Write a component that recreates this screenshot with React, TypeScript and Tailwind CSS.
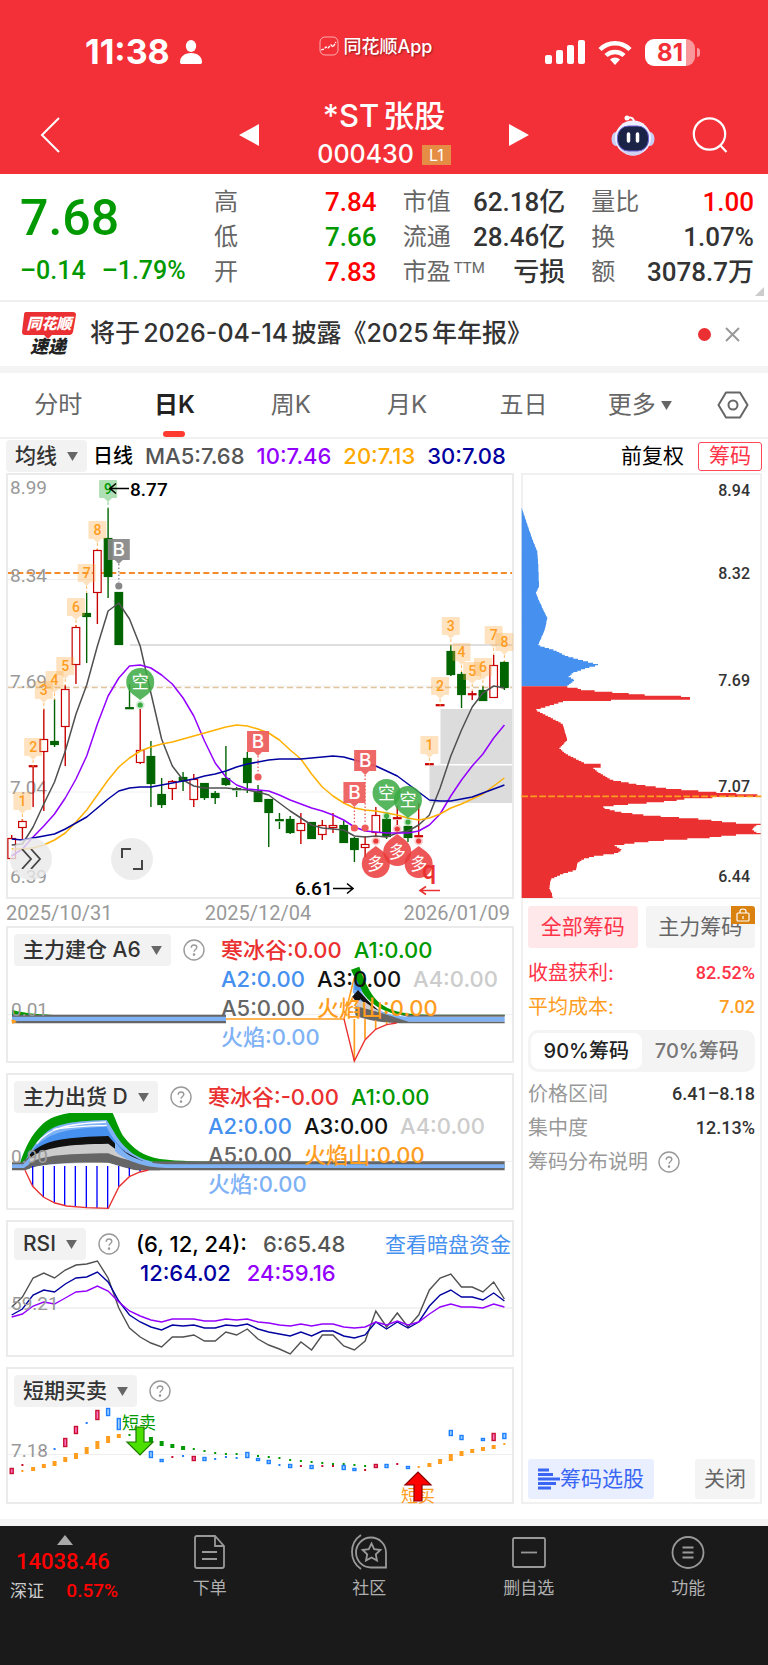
import { useState } from "react";
import type { ReactNode } from "react";

// horizontal slot of the n-th trading day, shared by every chart
const slot = (i: number) => 11.7 + i * 10.71;

type Candle = [top: number, bottom: number, high: number, low: number, up: boolean];

// [body top, body bottom, high, low, rising]
const CANDLES: Candle[] = [
  [837, 858, 834, 858, true], [820, 827, 818, 838, true], [765, 766, 765, 806, true], [738, 751, 708, 810, true],
  [740, 744, 698, 746, false], [688, 726, 684, 765, true], [626, 664, 624, 683, true], [612, 616, 592, 662, false],
  [549, 592, 548, 623, true], [537, 576, 507, 597, false], [591, 644, 591, 644, false], [707, 709, 683, 709, false],
  [749, 762, 708, 763, true], [755, 783, 740, 806, false], [793, 804, 777, 807, false], [780, 788, 779, 799, true],
  [776, 780, 771, 790, false], [778, 799, 773, 806, true], [782, 797, 782, 799, false], [792, 797, 790, 803, false],
  [777, 784, 745, 785, false], [788, 790, 786, 796, false], [757, 782, 751, 792, false], [790, 801, 784, 801, false],
  [798, 812, 798, 846, false], [819, 821, 812, 828, false], [818, 832, 815, 833, false], [822, 830, 812, 843, true],
  [821, 838, 821, 838, false], [824, 834, 819, 839, true], [824, 827, 812, 832, true], [824, 842, 820, 842, false],
  [837, 849, 836, 861, false], [843, 847, 835, 856, true], [814, 832, 806, 835, true], [818, 836, 817, 838, false],
  [817, 819, 805, 824, true], [825, 837, 825, 841, false], [835, 836, 802, 836, true], [763, 764, 763, 764, true],
  [704, 705, 704, 705, true], [650, 674, 644, 675, false], [673, 694, 671, 707, false], [693, 694, 690, 699, true],
  [689, 700, 685, 700, false], [664, 697, 654, 697, true], [661, 687, 660, 689, false],
];

const MA5 = [844, 843, 826, 803, 781, 750, 713, 684, 645, 610, 602, 618, 645, 692, 738, 765, 779, 785, 787, 787, 787, 788, 789, 791, 794, 802, 810, 817, 824, 827, 828, 829, 835, 836, 835, 836, 832, 830, 824, 814, 787, 755, 729, 706, 692, 685, 687];
const MA10 = [855, 848, 836, 825, 813, 797, 778, 755, 723, 695, 677, 665, 664, 667, 674, 683, 697, 715, 740, 762, 776, 784, 788, 789, 790, 794, 799, 803, 807, 810, 814, 819, 826, 830, 831, 832, 832, 832, 830, 824, 813, 795, 779, 765, 753, 737, 724];
const MA20 = [848, 848, 847, 844, 839, 832, 821, 809, 794, 779, 766, 757, 750, 746, 743, 741, 738, 735, 732, 729, 726, 724, 725, 728, 732, 739, 749, 758, 773, 786, 795, 802, 807, 809, 810, 812, 814, 817, 819, 817, 813, 807, 803, 798, 793, 785, 777];
const MA30 = [838, 839, 837, 835, 833, 828, 822, 816, 807, 798, 790, 787, 786, 786, 784, 782, 780, 778, 775, 773, 770, 766, 763, 761, 759, 758, 758, 758, 757, 756, 755, 756, 759, 762, 765, 770, 775, 783, 791, 799, 800, 800, 798, 796, 792, 788, 784];

const RSI6 = [87, 77, 58, 53, 58, 50, 45, 44, 41, 58, 88, 108, 117, 123, 127, 117, 117, 115, 121, 121, 112, 115, 109, 119, 125, 129, 134, 122, 130, 115, 115, 126, 130, 121, 91, 107, 93, 107, 95, 70, 58, 54, 67, 67, 72, 62, 79];
const RSI12 = [95, 89, 75, 70, 72, 64, 58, 57, 52, 62, 81, 95, 102, 107, 110, 105, 106, 105, 108, 108, 105, 106, 104, 109, 112, 114, 116, 112, 116, 111, 111, 116, 118, 115, 102, 109, 102, 108, 102, 86, 75, 70, 77, 77, 80, 73, 81];
const RSI24 = [97, 94, 86, 82, 84, 78, 72, 71, 66, 71, 82, 91, 96, 100, 102, 99, 99, 99, 101, 101, 99, 100, 99, 102, 103, 105, 106, 104, 106, 104, 104, 107, 108, 107, 102, 105, 101, 105, 102, 94, 87, 84, 87, 87, 88, 84, 87];

// nine-turn sequence tags: [day, label, top of the tag]
const TAGS: [number, string, number][] = [
  [1, "1", 791], [2, "2", 737], [3, "3", 680], [4, "4", 670], [5, "5", 656], [6, "6", 597], [7, "7", 563], [8, "8", 520],
  [39, "1", 735], [40, "2", 676], [41, "3", 616], [42, "4", 642], [43, "5", 661], [44, "6", 657], [45, "7", 625], [46, "8", 632],
];

// [y, reach] along the right edge of the chip distribution
const CHIPS: [number, number][] = [
  [126, 36], [150, 44], [180, 54], [215, 66], [255, 82], [300, 85], [360, 87], [378, 78], [400, 86], [455, 112], [490, 104],
  [536, 84], [552, 136], [568, 168], [584, 226], [595, 268], [603, 234], [618, 190], [630, 176], [640, 194], [658, 172], [661, 172],
  [662, 195], [670, 215], [678, 320], [685, 404], [690, 540], [697, 540], [700, 350], [704, 162], [716, 122], [730, 76], [750, 116],
  [772, 158], [820, 172], [845, 148], [862, 168], [892, 228], [893, 272], [901, 272], [903, 248], [915, 262], [940, 304], [955, 390],
  [966, 476], [972, 552], [978, 632], [985, 742], [991, 742], [994, 540], [1003, 488], [1009, 410], [1015, 326], [1022, 272],
  [1036, 326], [1045, 400], [1051, 478], [1058, 580], [1068, 660], [1073, 752], [1078, 736], [1088, 726], [1096, 736], [1101, 752],
  [1106, 660], [1114, 590], [1120, 474], [1128, 380], [1137, 314], [1150, 336], [1160, 320], [1168, 256], [1178, 218], [1190, 202],
  [1210, 198], [1222, 156], [1238, 122], [1265, 118], [1282, 126], [1296, 128],
];

const line = (ys: number[]) => ys.map((y, i) => `${slot(i).toFixed(1)},${y}`).join(" ");

function chipArea(from: number, to: number) {
  const pts = [`35,${from}`];
  for (let y = from; y < to; y += 4) {
    const k = Math.max(0, CHIPS.findIndex((c) => c[0] > y) - 1);
    const [y0, x0] = CHIPS[k];
    const [y1, x1] = CHIPS[k + 1] ?? CHIPS[k];
    const x = Math.round(x0 + ((x1 - x0) * (y - y0)) / Math.max(1, y1 - y0));
    pts.push(`${x},${y}`, `${x},${Math.min(to, y + 4)}`);
  }
  pts.push(`35,${to}`);
  return pts.join(" ");
}

function Caret({ className = "" }: { className?: string }) {
  return (
    <svg viewBox="0 0 12 10" className={`h-[9px] w-[11px] ${className}`} fill="#666">
      <path d="M0 0h12L6 10z" />
    </svg>
  );
}

function Picker({ label, value }: { label: string; value: string }) {
  return (
    <div className="relative shrink-0">
      <select
        aria-label={label}
        className="block h-8 appearance-none rounded-sm bg-[#f2f2f2] pr-[30px] pl-[9px] text-[21px] font-medium text-[#333]"
      >
        <option>{value}</option>
      </select>
      <Caret className="pointer-events-none absolute top-[12px] right-[9px]" />
    </div>
  );
}

function Help() {
  return (
    <button aria-label="说明" className="shrink-0">
      <svg viewBox="0 0 22 22" className="size-[22px]" fill="none" stroke="#999" strokeWidth="1.4">
        <circle cx="11" cy="11" r="10" />
        <path d="M8.2 8.8c0-1.7 1.2-2.8 2.8-2.8s2.8 1 2.8 2.5c0 1.9-2.8 2.2-2.8 4.3" />
        <circle cx="11" cy="15.6" r=".6" fill="#999" />
      </svg>
    </button>
  );
}

function Tag({ day, label, top, green }: { day: number; label: string; top: number; green?: boolean }) {
  const x = slot(day);
  const tone = green ? "#5fc06a" : "#ffa940";
  return (
    <g>
      <path
        d={`M${x - 8} ${top}h16a1 1 0 0 1 1 1v16a1 1 0 0 1-1 1h-4l-4 4-4-4h-4a1 1 0 0 1-1-1v-16a1 1 0 0 1 1-1z`}
        fill={tone}
        fillOpacity={green ? 0.5 : 0.33}
      />
      <path d={`M${x} ${top + 22}v7`} stroke={tone} strokeDasharray="3 2" strokeOpacity=".8" />
      <text x={x} y={top + 14} textAnchor="middle" fontSize="14" fontWeight="500" fill={green ? "#090" : "#ff9d1f"}>
        {label}
      </text>
    </g>
  );
}

function Flag({ day, top, dot, color }: { day: number; top: number; dot: number; color: string }) {
  const x = slot(day);
  return (
    <g fill={color}>
      <path d={`M${x - 11} ${top}h22v21h-7l-4 4-4-4h-7z`} fillOpacity=".92" />
      <path d={`M${x} ${top + 25}V${dot - 4}`} stroke={color} strokeWidth="1.3" strokeDasharray="1.5 2" />
      <circle cx={x} cy={dot} r="3.6" />
      <text x={x} y={top + 17} textAnchor="middle" fontSize="19" fontWeight="500" fill="#fff" className="font-['Inter',sans-serif]">
        B
      </text>
    </g>
  );
}

function Bubble({ day, y, dot, bull }: { day: number; y: number; dot: number; bull?: boolean }) {
  const x = slot(day);
  const color = bull ? "#ea3b3b" : "#3caa43";
  const s = bull ? -1 : 1;
  return (
    <g fill={color}>
      <circle cx={x} cy={dot} r="4.4" fillOpacity=".25" />
      <circle cx={x} cy={dot} r="2.6" />
      <path
        d={`M${x - 14} ${y}a14 14 0 1 ${bull ? 0 : 1} 28 0c0 ${s * 6}-3 ${s * 9}-6 ${s * 12}l-8 ${s * 6}l-8 ${-s * 6}c-3 ${-s * 3}-6 ${-s * 6}-6 ${-s * 12}z`}
        fillOpacity=".86"
      />
      <text x={x} y={y + 6} textAnchor="middle" fontSize="17" fill="#fff">
        {bull ? "多" : "空"}
      </text>
    </g>
  );
}

function KLine() {
  return (
    <svg viewBox="6 472 508 426" className="block h-auto w-full font-['Roboto','Noto_Sans_CJK_SC',sans-serif]">
      <rect x="7" y="473" width="506" height="424" fill="#fff" stroke="#ebebeb" strokeWidth="2" />
      <path d="M8 578.5H512M8 685H512M8 791H512" stroke="#f0f0f0" />
      <path d="M440.5 708H512v55H440.5zM429.5 764.5H512V802H429.5z" fill="#dcdcdc" />
      <path d="M130 644H512" stroke="#dedede" strokeWidth="2" />
      <path d="M8 572H512" stroke="#f58a2c" strokeWidth="2" strokeDasharray="6 3.3" />
      <path d="M8 686.5H512" stroke="#dfc49c" strokeWidth="1.5" strokeDasharray="6 3.3" />

      <g fontSize="19" fill="#999">
        <text x="10" y="493">8.99</text>
        <text x="10" y="581">8.34</text>
        <text x="10" y="687">7.69</text>
        <text x="10" y="793">7.04</text>
        <text x="10" y="882">6.39</text>
      </g>

      {CANDLES.map(([top, bottom, high, low, up], i) => {
        const x = slot(i);
        const color = up ? "#c80000" : "#006400";
        const thin = bottom - top < 3;
        return (
          <g key={i} stroke={color} fill={color}>
            <path d={`M${x} ${high}V${top}M${x} ${bottom}V${low}`} strokeWidth="1.4" />
            <rect
              x={x - 3.8}
              y={thin ? top - 0.3 : top + 0.5}
              width="7.6"
              height={thin ? 1 : bottom - top - 1}
              fill={up ? "#fff" : color}
              strokeWidth="1.2"
            />
          </g>
        );
      })}

      <g fill="none" strokeWidth="1.5" strokeLinejoin="round">
        <polyline points={line(MA5)} stroke="#505050" />
        <polyline points={line(MA10)} stroke="#9400ff" />
        <polyline points={line(MA20)} stroke="#ffb000" />
        <polyline points={line(MA30)} stroke="#0000a0" />
      </g>

      {TAGS.map(([day, label, top]) => (
        <Tag key={day} day={day} label={label} top={top} />
      ))}
      <Tag day={9} label="9" top={479} green />

      <Flag day={10} top={538} dot={585} color="#878787" />
      <Flag day={23} top={730} dot={776} color="#ee5b5b" />
      <Flag day={32} top={781} dot={827} color="#ee5b5b" />
      <Flag day={33} top={749} dot={827} color="#ee5b5b" />

      <Bubble day={12} y={681} dot={704} />
      <Bubble day={35} y={792} dot={815} />
      <Bubble day={37} y={799} dot={821} />
      <Bubble day={34} y={863} dot={840} bull />
      <Bubble day={36} y={851} dot={828} bull />
      <Bubble day={38} y={863} dot={840} bull />

      <path d="M129 487.500H110M116 482.500l-6 5 6 5" fill="none" stroke="#000" strokeWidth="1.6" />
      <text x="130" y="495" fontSize="19" fontWeight="500">8.77</text>
      <text x="295" y="894" fontSize="19" fontWeight="500">6.61</text>
      <path d="M333 887.500h20M347 882.500l6 5-6 5" fill="none" stroke="#000" strokeWidth="1.6" />
      <text x="422" y="878" fontSize="25" fontWeight="500" fill="#ea3030">q</text>
      <path d="M440 889.500h-20M426 885.500l-6 4 6 4" fill="none" stroke="#ea3030" strokeWidth="1.6" />
    </svg>
  );
}

function Panel({ axis, viewBox, drawing, children }: {
  axis: string;
  viewBox: string;
  drawing: ReactNode;
  children: ReactNode;
}) {
  return (
    <section className="relative h-[137px] bg-white ring-2 ring-[#ebebeb] ring-inset">
      <svg viewBox={viewBox} preserveAspectRatio="none" className="absolute inset-0 size-full">
        {drawing}
      </svg>
      <span className="absolute top-[72px] left-[5px] font-['Roboto',sans-serif] text-[19px] leading-6 text-[#999]">{axis}</span>
      <div className="relative flex gap-3 pt-2 pl-2">{children}</div>
    </section>
  );
}

function Readings({ valley }: { valley: string }) {
  return (
    <div className="flex max-w-[295px] flex-wrap gap-x-3 pt-[2px] pl-1 text-[22px] leading-[29px] font-medium">
      <span className="text-[#ea3030]">寒冰谷:{valley}</span>
      <span className="text-[#090]">A1:0.00</span>
      <span className="text-[#4690ef]">A2:0.00</span>
      <span className="text-[#111]">A3:0.00</span>
      <span className="text-[#ccc]">A4:0.00</span>
      <span className="text-[#666]">A5:0.00</span>
      <span className="text-[#ff9d1f]">火焰山:0.00</span>
      <span className="w-full text-[#7fb2f5]">火焰:0.00</span>
    </div>
  );
}

function BuildUp() {
  return (
    <>
      <path d="M22 281H1538" stroke="#eee" strokeWidth="3" />
      <path d="M36 266C70 276 100 278 160 282H36z" fill="#090" />
      <path d="M36 281H678V307H36z" fill="#666" />
      <path d="M36 287H678V300H36z" fill="#7fb2f5" />
      <path d="M34 296h10l6 8-14 4z" fill="#ff9d1f" />
      <path d="M678 294H1032L1063 170" fill="none" stroke="#ff9d1f" strokeWidth="5" />
      <path d="M1053 146l25-9c20 60 40 90 60 108 30 24 70 34 140 36h236v4h-280c-60-2-100-20-130-50-26-30-36-56-51-89z" fill="#090" />
      <path d="M1063 165c14 30 24 54 40 72 24 30 54 48 140 51h271v14h-290c-60-4-116-24-144-60l-22-28z" fill="#7fb2f5" />
      <path d="M1063 165l24 44-24-2z" fill="#4690ef" />
      <path d="M1056 228l18-21 30 32 30 28-30-6-22-26-12 8z" fill="#111" />
      <path d="M1066 238l30 6 44 30-72-12z" fill="#ccc" />
      <path d="M1066 256c50 10 90 24 160 46h288v5H1200c-50-2-100-8-134-24z" fill="#666" />
      <path d="M1200 281h314v6h-290z" fill="#666" />
      <path d="M1063 294V420M1095 294V355M1127 298V325M1160 302V311" stroke="#ff9d1f" strokeWidth="5" />
      <path d="M1032 294l31 126 32-63 32-32 33-14 30-5" fill="none" stroke="#ea3030" strokeWidth="4" />
    </>
  );
}

function SellOff() {
  return (
    <>
      <path d="M22 721H1538" stroke="#eee" strokeWidth="3" />
      <path d="M60 726C75 680 95 640 125 612C160 580 200 570 335 570C350 600 360 634 372 648C400 684 430 706 480 714C540 722 600 720 680 724V736H60z" fill="#090" />
      <path d="M68 736C80 710 100 670 130 642C160 612 200 600 320 597C336 620 350 652 370 672C400 704 430 722 500 728H680V740H68z" fill="#7fb2f5" />
      <path d="M110 668C150 618 210 608 318 603" fill="none" stroke="#fff" strokeWidth="4" />
      <path d="M92 694C140 630 210 622 320 617C336 650 350 668 376 690L340 700H92z" fill="#4690ef" />
      <path d="M160 626C200 617 250 616 320 613" fill="none" stroke="#fff" strokeWidth="4" />
      <path d="M88 702C130 652 210 649 325 645C350 675 370 694 430 720H92z" fill="#111" />
      <path d="M82 716C130 676 210 670 325 668C356 694 390 710 440 728H82z" fill="#ccc" />
      <path d="M74 736C110 704 190 698 325 697C360 712 400 724 480 732V748H410C380 744 350 732 325 725C210 724 130 726 76 748z" fill="#666" />
      <path d="M90 742C130 728 210 726 325 726C350 732 370 740 400 746L340 750H100z" fill="#fff" />
      <path d="M36 724H66L88 706V738L74 748H36z" fill="#666" />
      <path d="M36 730H70L92 706L88 730L72 741H36z" fill="#7fb2f5" />
      <path d="M460 721H1514V748H440z" fill="#666" />
      <path d="M345 662C380 708 420 724 500 730H1514V741H500C430 740 370 716 345 690z" fill="#7fb2f5" />
      <path
        d="M98 735V796M130 735V828M163 735V846M194 735V854M226 735V858M259 735V860M291 735V861M323 735V862M356 735V797M388 740V765M420 746V752"
        stroke="#00f"
        strokeWidth="4"
      />
      <path d="M75 748L98 796L130 828L165 846L200 855L260 860L325 862L357 797L388 767L420 753L445 747" fill="none" stroke="#ea3030" strokeWidth="4" />
    </>
  );
}

function Rsi() {
  return (
    <g fill="none" strokeWidth="1.4">
      <path d="M8 88H512" stroke="#eee" />
      <polyline points={line(RSI6)} stroke="#505050" />
      <polyline points={line(RSI12)} stroke="#0000a0" />
      <polyline points={line(RSI24)} stroke="#9400ff" />
    </g>
  );
}

// [day, top, height]; a height of 2 is a plain tick
type Bar = [number, number, number];
const RED_BARS: Bar[] = [
  [0, 101, 6], [1, 97, 2], [3, 82, 2], [5, 71, 9], [6, 59, 8], [8, 43, 10], [15, 89, 2], [17, 89, 5], [27, 98, 2], [29, 98, 2],
  [30, 98, 2], [33, 102, 2], [34, 97, 4], [36, 96, 2], [45, 66, 8],
];
const BLUE_BARS: Bar[] = [
  [4, 81, 2], [7, 55, 2], [9, 41, 8], [10, 51, 12], [13, 84, 7], [14, 92, 3], [16, 88, 2], [18, 90, 4], [19, 91, 2], [20, 89, 2],
  [21, 90, 2], [22, 85, 6], [23, 91, 3], [24, 93, 4], [25, 97, 2], [26, 97, 4], [28, 98, 4], [31, 98, 5], [32, 101, 3], [35, 97, 4],
  [37, 99, 3], [41, 63, 6], [42, 68, 5], [44, 71, 3], [46, 66, 6],
];
const ORANGE_BARS: Bar[] = [
  [1, 103, 2], [2, 100, 4], [3, 97, 4], [4, 94, 5], [5, 90, 5], [6, 86, 6], [7, 80, 7], [8, 74, 8], [9, 69, 7], [10, 67, 4],
  [38, 99, 2], [39, 96, 4], [40, 92, 5], [41, 87, 7], [42, 84, 5], [43, 82, 4], [44, 80, 4], [45, 78, 4], [46, 76, 2],
];
const GREEN_BARS: Bar[] = [
  [11, 67, 2], [13, 70, 6], [14, 74, 5], [15, 77, 4], [16, 79, 4], [17, 81, 2], [18, 83, 2], [19, 85, 2], [20, 86, 2], [21, 86, 2],
  [22, 88, 2], [23, 88, 2], [24, 89, 2], [25, 90, 2], [26, 92, 2], [27, 93, 2], [28, 94, 2], [29, 95, 2], [30, 96, 2], [31, 96, 2],
  [32, 97, 2], [33, 98, 2],
];

function ShortTerm() {
  const hollow = (bars: Bar[], stroke: string, fill: string) =>
    bars.map(([i, y, h]) =>
      h === 2 ? (
        <rect key={stroke + i} x={slot(i) - 1} y={y} width="2" height="2" fill={stroke} />
      ) : (
        <rect key={stroke + i} x={slot(i) - 1.5} y={y + 0.5} width="3" height={h - 1} fill={fill} stroke={stroke} strokeWidth="1.4" />
      ),
    );
  const solid = (bars: Bar[], fill: string) =>
    bars.map(([i, y, h]) => (
      <rect key={fill + i} x={slot(i) - (h === 2 ? 1 : 2)} y={y} width={h === 2 ? 2 : 4} height={h} fill={fill} />
    ));
  return (
    <g className="font-['Noto_Sans_CJK_SC',sans-serif]" fontSize="17">
      <path d="M8 87.500H512" stroke="#eee" />
      {solid(ORANGE_BARS, "#ff9d1f")}
      {solid(GREEN_BARS, "#090")}
      {hollow(RED_BARS, "#c8102e", "#ff6ec7")}
      {hollow(BLUE_BARS, "#1e80ff", "#9fd0ff")}
      <text x="139" y="62" textAnchor="middle" fill="#090">短卖</text>
      <path d="M136 60h8v15h9l-13 13-13-13h9z" fill="#4be000" stroke="#1d7a00" strokeWidth="1.2" />
      <text x="418" y="135" textAnchor="middle" fill="#ff9d1f">短买</text>
      <path d="M414 134h8v-16h9l-13-13-13 13h9z" fill="#f00" stroke="#800" strokeWidth="1.2" />
    </g>
  );
}

function Quote({ label, note, value, tone = "text-[#333]" }: { label: string; note?: string; value: string; tone?: string }) {
  return (
    <div className="flex justify-between leading-[35px]">
      <dt className="flex text-[24px] text-[#666]">
        {label}
        {note && <span className="ml-[3px] text-[15px] leading-[26px]">{note}</span>}
      </dt>
      <dd className={`text-[26px] font-medium ${tone}`}>{value}</dd>
    </div>
  );
}

function StatRow({ label, value, tone }: { label: string; value: string; tone: string }) {
  return (
    <div className={`flex items-center justify-between leading-[34px] ${tone}`}>
      <dt className="text-[20px]">{label}</dt>
      <dd className="font-['Roboto',sans-serif] text-[18px] font-medium">{value}</dd>
    </div>
  );
}

function Header() {
  return (
    <header className="bg-[#f33038] text-white">
      <div className="grid h-[72px] grid-cols-[1fr_auto_1fr] items-center px-[68px] pt-8">
        <div className="flex h-10 items-center gap-[10px] pl-[17px]">
          <span className="text-[34px] leading-10 font-bold">11:38</span>
          <svg viewBox="0 0 22 24" className="h-6 w-[22px]" fill="currentColor">
            <ellipse cx="11" cy="6" rx="5.200" ry="6" />
            <path d="M0 22c0-5 4-9 11-9s11 4 11 9c0 1.500-.6 2-2 2H2c-1.400 0-2-.5-2-2z" />
          </svg>
        </div>
        <div className="mr-4 flex h-7 items-center gap-1 self-start text-[18px] font-medium [text-shadow:1px_1px_2px_#0006]">
          <svg viewBox="0 0 20 20" className="size-5" fill="none" stroke="#fff">
            <rect x="1" y="1" width="18" height="18" rx="5" strokeOpacity=".6" />
            <path d="M2 14l3-1 2-2 2 1 3-3 2 2 3-5" strokeWidth="1.300" strokeDasharray="3 1" />
          </svg>
          同花顺App
        </div>
        <div className="flex items-center justify-end gap-[13px]">
          <svg viewBox="0 0 40 24" className="h-6 w-10" fill="currentColor">
            <rect x="0" y="15" width="7" height="9" rx="2" />
            <rect x="11" y="10" width="7" height="14" rx="2" />
            <rect x="22" y="5" width="7" height="19" rx="2" />
            <rect x="33" y="0" width="7" height="24" rx="2" />
          </svg>
          <svg viewBox="0 0 34 25" className="h-[25px] w-[34px]" fill="none" stroke="currentColor" strokeWidth="4.500">
            <path d="M2 9.500a21 21 0 0 1 30 0" />
            <path d="M8 15.500a13 13 0 0 1 18 0" />
            <path d="M17 25l-5-5.500a7 7 0 0 1 10 0z" fill="currentColor" stroke="none" />
          </svg>
          <div className="flex items-center gap-[2px]">
            <div className="flex h-[27px] w-[50px] items-center justify-center rounded-[9px] bg-linear-to-r from-white from-82% to-white/50 to-82% text-[24px] leading-[27px] font-bold text-[#f33038]">
              81
            </div>
            <div className="h-[9px] w-[3px] rounded-r-full bg-white/50" />
          </div>
        </div>
      </div>
      <div className="grid grid-cols-[1fr_auto_1fr] items-center pt-6 pr-10 pl-10">
        <button aria-label="返回" className="justify-self-start">
          <svg viewBox="0 0 20 36" className="h-9 w-5" fill="none" stroke="currentColor" strokeWidth="2">
            <path d="M19 1L2 18l17 17" />
          </svg>
        </button>
        <div className="flex w-[290px] items-center justify-between">
          <button aria-label="上一只">
            <svg viewBox="0 0 20 22" className="h-[22px] w-5" fill="currentColor"><path d="M20 0v22L0 11z" /></svg>
          </button>
          <div className="text-center">
            <h1 className="text-[31px] leading-10 font-medium [text-autospace:normal]">*ST张股</h1>
            <div className="flex h-[38px] items-center justify-center gap-2">
              <span className="text-[25px] font-medium">000430</span>
              <span className="bg-[#e58c45] px-[7px] text-[16px] leading-5">L1</span>
            </div>
          </div>
          <button aria-label="下一只">
            <svg viewBox="0 0 20 22" className="h-[22px] w-5" fill="currentColor"><path d="M0 0v22l20-11z" /></svg>
          </button>
        </div>
        <div className="flex items-center gap-[37px] justify-self-end">
          <button aria-label="智能助手">
            <svg viewBox="0 0 44 42" className="h-[42px] w-11" fill="none">
              <path d="M16 5c3-3 7-1 7 3" stroke="#fff" strokeWidth="2" />
              <circle cx="16" cy="4" r="2.500" fill="#fff" />
              <ellipse cx="5" cy="25" rx="4.500" ry="7" fill="#c9cdf2" />
              <ellipse cx="39" cy="25" rx="4.500" ry="7" fill="#c9cdf2" />
              <ellipse cx="22" cy="24" rx="18" ry="17.500" fill="#eef0ff" />
              <path d="M7 31c4 8 10 10.500 15 10.500S33 39 37 31z" fill="#cfd0f4" />
              <rect x="6.500" y="12" width="31" height="25" rx="11" fill="#1b2446" stroke="#6c62d8" />
              <path d="M17.500 20v7M26.500 20v7" stroke="#fff" strokeWidth="3.500" strokeLinecap="round" />
            </svg>
          </button>
          <button aria-label="搜索">
            <svg viewBox="0 0 36 36" className="size-9" fill="none" stroke="currentColor" strokeWidth="2.200">
              <circle cx="17.500" cy="17" r="15.700" />
              <path d="M28 28l6.500 7" />
            </svg>
          </button>
        </div>
      </div>
    </header>
  );
}

const TABS = ["分时", "日K", "周K", "月K", "五日"];

export default function App() {
  const [tab, setTab] = useState("日K");

  return (
    <div className="min-w-[720px] bg-white font-['Inter','Noto_Sans_CJK_SC',sans-serif] text-black">
      <Header />

      <section className="relative grid grid-cols-[168px_1fr_1fr_1fr] gap-x-[26px] border-b-2 border-[#efefef] pt-[11px] pr-[14px] pb-[9px] pl-5 font-['Roboto','Noto_Sans_CJK_SC',sans-serif]">
        <div className="font-medium whitespace-nowrap text-[#090]">
          <div className="text-[50px] leading-[66px]">7.68</div>
          <div className="flex gap-4 text-[25px] leading-10">
            <span>–0.14</span>
            <span>–1.79%</span>
          </div>
        </div>
        <dl>
          <Quote label="高" value="7.84" tone="text-[#f00]" />
          <Quote label="低" value="7.66" tone="text-[#090]" />
          <Quote label="开" value="7.83" tone="text-[#f00]" />
        </dl>
        <dl>
          <Quote label="市值" value="62.18亿" />
          <Quote label="流通" value="28.46亿" />
          <Quote label="市盈" note="TTM" value="亏损" />
        </dl>
        <dl>
          <Quote label="量比" value="1.00" tone="text-[#f00]" />
          <Quote label="换" value="1.07%" />
          <Quote label="额" value="3078.7万" />
        </dl>
        <svg viewBox="0 0 9 9" className="absolute right-1 bottom-1 size-[9px]" fill="#ccc"><path d="M9 0v9H0z" /></svg>
      </section>

      <section className="flex h-16 items-center pr-7 pl-[22px]">
        <svg viewBox="0 0 54 44" className="h-11 w-[54px] overflow-visible font-['Noto_Sans_CJK_SC',sans-serif]" fontWeight="900" fontStyle="italic">
          <path d="M4 0h47q3 0 3 3l-3 17q-1 3-3 3H30l-4 4-4-4H3q-3 0-3-3L2 3q0-3 2-3z" fill="#ea3033" />
          <text x="27" y="17" textAnchor="middle" fontSize="15" fill="#fff">同花顺</text>
          <text x="26" y="41" textAnchor="middle" fontSize="18" fill="#222">速递</text>
        </svg>
        <p className="ml-[14px] text-[25px] font-medium text-[#333] [text-autospace:normal]">将于2026-04-14披露《2025年年报》</p>
        <span className="ml-auto size-[13px] rounded-full bg-[#ea3033]" />
        <button aria-label="关闭提示" className="ml-[14px]">
          <svg viewBox="0 0 15 15" className="size-[15px]" stroke="#999" strokeWidth="2"><path d="M1 1l13 13M14 1L1 14" /></svg>
        </button>
      </section>
      <div className="h-[7px] bg-[#f4f4f4]" />

      <nav className="grid h-[66px] grid-cols-[repeat(6,1fr)_70px] border-b-2 border-[#f0f0f0] text-[24px] text-[#666]">
        {TABS.map((name) => (
          <button
            key={name}
            onClick={() => setTab(name)}
            className={tab === name ? "relative font-semibold text-[#222]" : "relative"}
          >
            {name}
            {tab === name && <span className="absolute bottom-0 left-1/2 h-[6px] w-[22px] -translate-x-1/2 rounded-full bg-[#ff3b30]" />}
          </button>
        ))}
        <button className="flex items-center justify-center gap-[5px]">
          更多
          <Caret />
        </button>
        <button aria-label="设置" className="flex items-center justify-center">
          <svg viewBox="0 0 32 28" className="h-7 w-8" fill="none" stroke="#666" strokeWidth="2">
            <path d="M9 1.500h14L30.500 14 23 26.500H9L1.500 14z" strokeLinejoin="round" />
            <circle cx="16" cy="14" r="4.500" />
          </svg>
        </button>
      </nav>

      <div className="flex h-[34px] items-center px-[6px] text-[22px] font-medium whitespace-nowrap">
        <Picker label="指标" value="均线" />
        <div className="ml-[6px] flex items-center gap-3">
          <span className="text-[20px]">日线</span>
          <span className="text-[#555]">MA5:7.68</span>
          <span className="text-[#9400ff]">10:7.46</span>
          <span className="text-[#ffa800]">20:7.13</span>
          <span className="text-[#0000a0]">30:7.08</span>
        </div>
        <button className="ml-auto text-[21px] font-normal">前复权</button>
        <button className="ml-[14px] h-[29px] rounded-[3px] border-[1.5px] border-[#ff4757] px-[10px] text-[21px] leading-6 font-normal text-[#ff3347]">筹码</button>
      </div>

      <main className="grid grid-cols-[508fr_241fr] gap-[7px] px-[6px]">
        <div>
          <div className="relative">
            <KLine />
            <button aria-label="展开" className="absolute bottom-[19px] left-1 flex size-[42px] items-center justify-center rounded-full bg-[#e8e8e8]/80">
              <svg viewBox="0 0 20 20" className="size-5" fill="none" stroke="#444" strokeWidth="1.800"><path d="M1 0l9 10-9 10M10 0l9 10-9 10" /></svg>
            </button>
            <button aria-label="全屏" className="absolute bottom-[19px] left-[105px] flex size-[42px] items-center justify-center rounded-full bg-[#e8e8e8]/80">
              <svg viewBox="0 0 22 22" className="size-[22px]" fill="none" stroke="#444" strokeWidth="2"><path d="M1 10V1h9M21 12v9h-9" /></svg>
            </button>
          </div>
          <div className="flex h-[27px] items-center justify-between pr-1 font-['Roboto',sans-serif] text-[20px] text-[#999]">
            <span>2025/10/31</span>
            <span>2025/12/04</span>
            <span>2026/01/09</span>
          </div>

          <div className="flex flex-col gap-[10px]">
            <Panel axis="0.01" viewBox="18 15 1524 411" drawing={<BuildUp />}>
              <Picker label="指标一" value="主力建仓 A6" />
              <div className="flex h-8 items-center"><Help /></div>
              <Readings valley="0.00" />
            </Panel>
            <Panel axis="0.90" viewBox="18 456 1524 411" drawing={<SellOff />}>
              <Picker label="指标二" value="主力出货 D" />
              <div className="flex h-8 items-center"><Help /></div>
              <Readings valley="-0.00" />
            </Panel>
            <Panel axis="59.21" viewBox="6 0 508 137" drawing={<Rsi />}>
              <Picker label="指标三" value="RSI" />
              <div className="flex h-8 items-center"><Help /></div>
              <div className="flex grow justify-between pt-[2px] pl-1 text-[22px] leading-[29px] font-medium">
                <div>
                  <div className="flex gap-4">
                    <span>(6, 12, 24):</span>
                    <span className="text-[#555]">6:65.48</span>
                  </div>
                  <div className="flex gap-4 pl-1">
                    <span className="text-[#0000a0]">12:64.02</span>
                    <span className="text-[#9400ff]">24:59.16</span>
                  </div>
                </div>
                <a href="#" className="pr-[3px] text-[21px] font-normal text-[#4690ef]">查看暗盘资金</a>
              </div>
            </Panel>
            <Panel axis="7.18" viewBox="6 0 508 137" drawing={<ShortTerm />}>
              <Picker label="指标四" value="短期买卖" />
              <div className="flex h-8 items-center"><Help /></div>
            </Panel>
          </div>
        </div>

        <aside className="flex flex-col ring-2 ring-[#f0f0f0] ring-inset">
          <svg viewBox="33 21 723 1278" className="block h-auto w-full font-['Roboto',sans-serif]">
            <path d="M33 1297H756" stroke="#f0f0f0" strokeWidth="5" />
            <g fontSize="48" fontWeight="500" fill="#333" textAnchor="end">
              <text x="720" y="91">8.94</text>
              <text x="720" y="340">8.32</text>
              <text x="720" y="659">7.69</text>
              <text x="720" y="978">7.07</text>
              <text x="720" y="1248">6.44</text>
            </g>
            <polygon points={chipArea(126, 661)} fill="#4690ef" />
            <polygon points={chipArea(661, 1296)} fill="#ea3030" />
            <path d="M34 991H754" stroke="#ff9d1f" strokeWidth="5" strokeDasharray="20 7" />
          </svg>
          <div className="flex grow flex-col px-[7px] pt-[7px] pb-[5px]">
            <div className="grid grid-cols-2 gap-2 text-[21px]">
              <button className="h-[42px] rounded-[3px] bg-[#ffe8ea] text-[#ff3347]">全部筹码</button>
              <button className="relative h-[42px] rounded-[3px] bg-[#f4f4f4] text-[#666]">
                主力筹码
                <span className="absolute top-0 right-0 flex h-[18px] w-6 items-center justify-center rounded-tr-[3px] bg-[#d9820f]">
                  <svg viewBox="0 0 14 14" className="size-[14px]" fill="none" stroke="#fff" strokeWidth="1.200">
                    <rect x="1" y="5" width="12" height="8" rx="1" />
                    <path d="M4 5V3.500a3 2.500 0 0 1 6 0V5M7 8v3" />
                  </svg>
                </span>
              </button>
            </div>
            <dl className="mt-2">
              <StatRow label="收盘获利:" value="82.52%" tone="text-[#ff3347]" />
              <StatRow label="平均成本:" value="7.02" tone="text-[#ff9d1f]" />
            </dl>
            <div className="mt-[6px] grid h-[42px] grid-cols-2 rounded-[10px] bg-[#f4f4f4] p-[3px] text-[20px]">
              <button className="rounded-[8px] bg-white font-medium text-[#222]">90%筹码</button>
              <button className="font-medium text-[#777]">70%筹码</button>
            </div>
            <dl className="mt-[5px]">
              <StatRow label="价格区间" value="6.41–8.18" tone="text-[#333] [&>dt]:text-[#999]" />
              <StatRow label="集中度" value="12.13%" tone="text-[#333] [&>dt]:text-[#999]" />
            </dl>
            <div className="flex items-center gap-[10px] text-[20px] leading-[34px] text-[#999]">
              筹码分布说明
              <Help />
            </div>
            <div className="mt-auto flex justify-between text-[21px]">
              <button className="flex h-10 items-center rounded-[3px] bg-[#e9efff] px-[10px] text-[#3a66f5]">
                <svg viewBox="0 0 22 22" className="size-[22px]" stroke="currentColor" strokeWidth="2.800">
                  <path d="M0 2h11M0 6.500h15M0 11h22M0 15.500h18M0 20h13" />
                </svg>
                筹码选股
              </button>
              <button className="h-10 rounded-[3px] bg-[#f4f4f4] px-[9px] text-[#666]">关闭</button>
            </div>
          </div>
        </aside>
      </main>

      <footer className="mt-[15px] border-t-[7px] border-[#f4f4f4]">
        <nav className="grid h-[139px] grid-cols-[130px_repeat(4,1fr)] items-start bg-[#1a1a1a] text-[17px] text-[#b0b0b0]">
          <a href="#" className="flex flex-col pt-[9px] font-['Roboto','Noto_Sans_CJK_SC',sans-serif] text-[#f00]">
            <svg viewBox="0 0 16 10" className="mx-auto h-[10px] w-4" fill="#aaa"><path d="M8 0l8 10H0z" /></svg>
            <span className="pl-4 text-[22px] leading-[34px] font-medium">14038.46</span>
            <span className="flex justify-between pr-3 pl-[10px] text-[19px] leading-6 font-medium">
              <span className="text-[17px] font-normal text-[#ccc]">深证</span>0.57%
            </span>
          </a>
          <a href="#" className="flex flex-col items-center gap-[6px] pt-2 leading-6">
            <svg viewBox="0 0 36 36" className="size-9" fill="none" stroke="#999" strokeWidth="1.800">
              <path d="M3 4q0-2 2-2h18l9 10v20q0 2-2 2H5q-2 0-2-2zM23 2v10h9M10 18h15M10 25h15" />
            </svg>
            下单
          </a>
          <a href="#" className="flex flex-col items-center gap-[6px] pt-2 leading-6">
            <svg viewBox="0 0 36 36" className="size-9" fill="none" stroke="#999" strokeWidth="1.800">
              <path d="M10 1C-2 9-2 27 10 35" />
              <path d="M35 33.500H20.500A15 15 0 1 1 35 18.500z" />
              <path d="M20.500 9.500l2.700 5.700 6.200.8-4.600 4.300 1.200 6.200-5.500-3-5.500 3 1.200-6.200-4.600-4.300 6.200-.8z" />
            </svg>
            社区
          </a>
          <a href="#" className="flex flex-col items-center gap-[6px] pt-2 leading-6">
            <svg viewBox="0 0 36 36" className="size-9" fill="none" stroke="#999" strokeWidth="1.800">
              <rect x="2" y="4" width="32" height="29" rx="1.500" />
              <path d="M10 18.500h16" />
            </svg>
            删自选
          </a>
          <a href="#" className="flex flex-col items-center gap-[6px] pt-2 leading-6">
            <svg viewBox="0 0 36 36" className="size-9" fill="none" stroke="#999" strokeWidth="1.800">
              <circle cx="18" cy="18.500" r="15.500" />
              <path d="M12.500 13.500h11M12.500 18.500h11M12.500 23.500h11" />
            </svg>
            功能
          </a>
        </nav>
      </footer>
    </div>
  );
}
